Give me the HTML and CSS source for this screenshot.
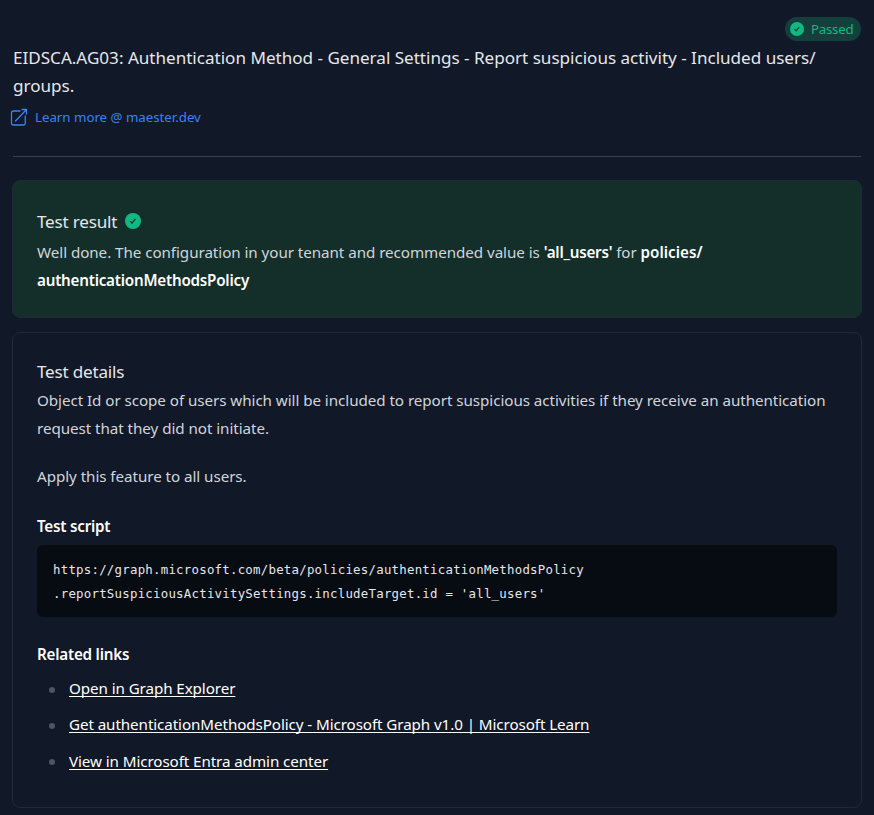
FILE: index.html
```html
<!DOCTYPE html>
<html lang="en">
<head>
<meta charset="utf-8">
<title>Test details</title>
<link rel="stylesheet" href="styles.css">
</head>
<body>
<main class="panel">
  <header class="header">
    <div class="badge">
      <svg class="badge-icon" viewBox="0 0 20 20"><circle cx="10" cy="10" r="10" fill="#10b981"/><path d="M6.5 10.4l2.3 2.3 4.3-5.3" fill="none" stroke="#143f3b" stroke-width="1.8"/></svg>
      <span class="badge-text">Passed</span>
    </div>
    <h1 class="title">EIDSCA.AG03: Authentication Method - General Settings - Report suspicious activity - Included users/<br>groups.</h1>
    <a class="learn">
      <svg class="learn-icon" viewBox="0 0 18 18" fill="none" stroke="#3b82f6" stroke-width="1.3" stroke-linecap="round" stroke-linejoin="round"><path d="M10 3H3.5Q1.5 3 1.5 5v10.3q0 1.7 2 1.7h10q1.8 0 1.8-1.8V8M5.5 13L16.5 1.5M12 1.5h4.5V6"/></svg>
      <span>Learn more @ maester.dev</span>
    </a>
  </header>
  <hr class="divider">
  <section class="card result">
    <h2 class="heading"><span>Test result</span>
      <svg class="result-icon" viewBox="0 0 20 20"><circle cx="10" cy="10" r="10" fill="#10b981"/><path d="M6.5 10.4l2.3 2.3 4.3-5.3" fill="none" stroke="#142f2a" stroke-width="1.6"/></svg>
    </h2>
    <p class="text">Well done. The configuration in your tenant and recommended value is <b>'all_users'</b> for <b class="path">policies/</b><br><b>authenticationMethodsPolicy</b></p>
  </section>
  <section class="card details">
    <h2 class="heading">Test details</h2>
    <p class="text">Object Id or scope of users which will be included to report suspicious activities if they receive an authentication<br>request that they did not initiate.</p>
    <p class="text apply">Apply this feature to all users.</p>
    <h3 class="sub script">Test script</h3>
    <pre class="code"><code>https://graph.microsoft.com/beta/policies/authenticationMethodsPolicy
.reportSuspiciousActivitySettings.includeTarget.id = 'all_users'</code></pre>
    <h3 class="sub related">Related links</h3>
    <ul class="links">
      <li><a>Open in Graph Explorer</a></li>
      <li><a>Get authenticationMethodsPolicy - Microsoft Graph v1.0 | Microsoft Learn</a></li>
      <li><a>View in Microsoft Entra admin center</a></li>
    </ul>
  </section>
</main>
</body>
</html>
```
FILE: styles.css
```css
* { box-sizing: border-box; }
body { margin: 0; background: #111827; color: #e5e7eb; font-family: "Noto Sans", sans-serif; height: 815px; overflow: hidden; }
h1, h2, h3, p, ul, pre, hr { margin: 0; padding: 0; border: 0; font-weight: 400; }
.panel { padding: 17px 12px 0; }
.header { display: flex; flex-direction: column; height: 139px; }
.badge { align-self: flex-end; display: flex; align-items: center; width: 76px; height: 24px; padding-left: 5px; margin-right: 1px; border-radius: 12px; background: #133f3c; color: #10b981; font-size: 13.3px; line-height: 24px; letter-spacing: -.25px; }
.badge-icon { width: 14px; height: 14px; margin-right: 7px; }
.title { margin: 3px 0 0 1px; font-size: 17.1px; line-height: 28px; letter-spacing: -.015px; white-space: nowrap; }
.learn { display: flex; align-items: center; height: 20px; margin-top: 7px; color: #3b82f6; font-size: 13.3px; line-height: 20px; letter-spacing: -.02px; margin-left: -2px; }
.learn-icon { width: 18px; height: 18px; margin-right: 7px; }
.divider { height: 1px; background: #374151; margin: 0 1px; }
.card { border: 1px solid #1f2937; border-radius: 8px; padding: 24px; }
.result { margin-top: 23px; height: 138px; background: #142f2a; padding-top: 27px; }
.heading { display: flex; align-items: center; height: 28px; font-size: 17.1px; line-height: 28px; letter-spacing: -.2px; }
.result-icon { width: 16px; height: 16px; margin-left: 8px; margin-top: -2px; }
.text { font-size: 15.2px; line-height: 28px; letter-spacing: -.058px; color: #d1d5db; white-space: nowrap; }
.result .text { margin-top: 2px; }
.text b { color: #fff; font-weight: 600; letter-spacing: -.22px; }
.text .path { letter-spacing: 0; }
.details { margin-top: 14px; height: 476px; padding-top: 25px; }
.details .text { margin-top: 0; }
.details .apply { margin-top: 20px; }
.sub { font-size: 15.2px; line-height: 24px; letter-spacing: -.22px; font-weight: 600; color: #fff; }
.script { margin-top: 24px; }
.code { margin-top: 7px; height: 72px; padding: 13px 16px 11px; border-radius: 6px; background: #070b12; color: #e5e7eb; font-size: 12.4px; line-height: 24px; }
.code code { font-family: "DejaVu Sans Mono", monospace; letter-spacing: .235px; }
.related { margin-top: 25px; }
.links { list-style: none; margin-top: 8px; font-size: 15.2px; line-height: 28px; letter-spacing: -.09px; color: #fff; }
.links li { display: flex; align-items: center; margin-bottom: 8.4px; white-space: nowrap; }
.links li::before { content: ""; width: 6px; height: 6px; border-radius: 50%; background: #4b5563; margin: 3px 14px 0 12px; }
.links a { text-decoration: underline; text-decoration-thickness: 1px; text-underline-offset: 2px; text-decoration-skip-ink: none; }
```
